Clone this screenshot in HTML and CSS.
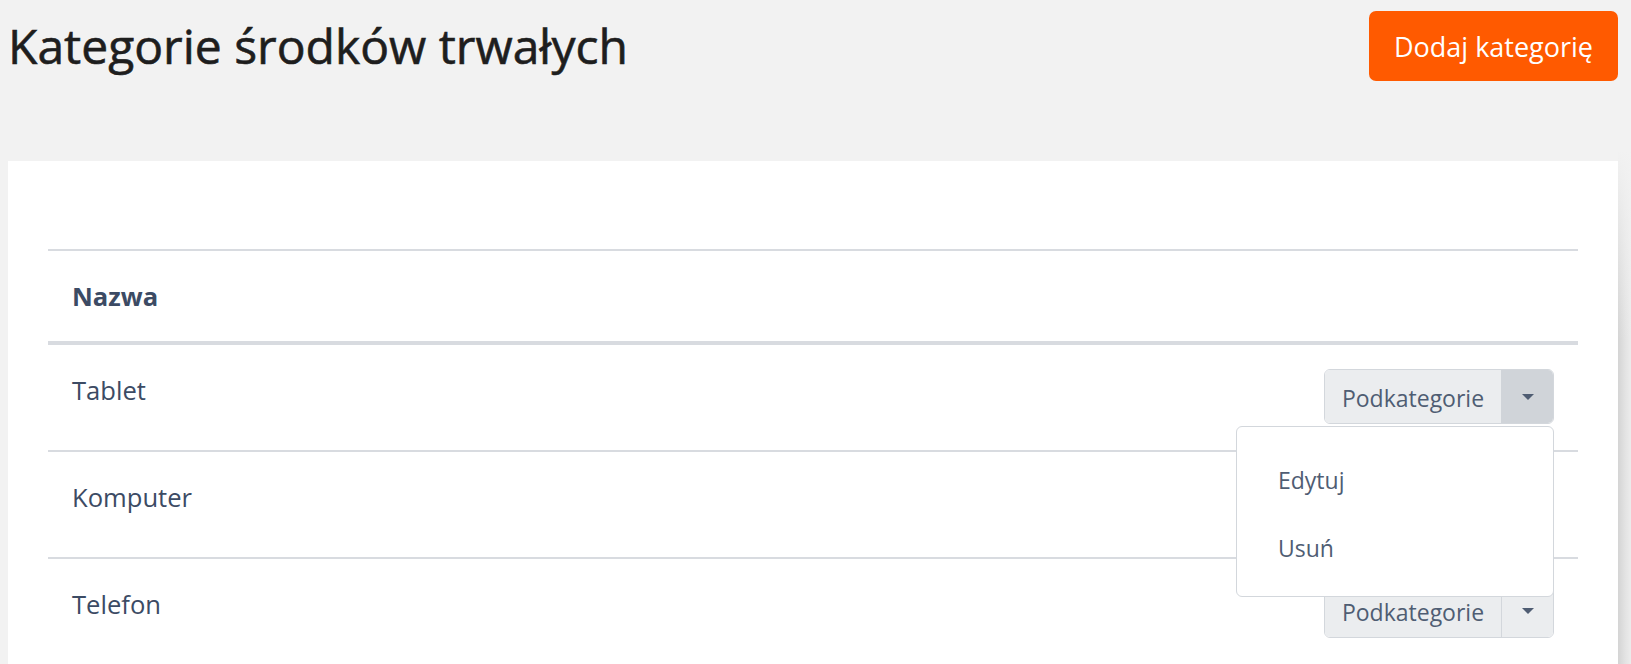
FILE: index.html
```html
<!DOCTYPE html>
<html lang="pl">
<head>
<meta charset="utf-8">
<title>Kategorie środków trwałych</title>
<link rel="stylesheet" href="styles.css">
</head>
<body>
<div class="page">
  <header class="page-head">
    <h1 class="title">Kategorie środków trwałych</h1>
    <button class="btn-add" type="button">Dodaj kategorię</button>
  </header>
  <section class="card">
    <table class="tbl">
      <thead>
        <tr><th>Nazwa</th><th></th></tr>
      </thead>
      <tbody>
        <tr>
          <td class="name">Tablet</td>
          <td class="actions">
            <div class="btn-group open">
              <button class="btn-main" type="button">Podkategorie</button>
              <button class="btn-caret" type="button"><span class="caret"></span></button>
              <div class="menu">
                <a class="menu-item">Edytuj</a>
                <a class="menu-item">Usuń</a>
              </div>
            </div>
          </td>
        </tr>
        <tr>
          <td class="name">Komputer</td>
          <td class="actions">
            <div class="btn-group">
              <button class="btn-main" type="button">Podkategorie</button>
              <button class="btn-caret" type="button"><span class="caret"></span></button>
            </div>
          </td>
        </tr>
        <tr>
          <td class="name">Telefon</td>
          <td class="actions">
            <div class="btn-group">
              <button class="btn-main" type="button">Podkategorie</button>
              <button class="btn-caret" type="button"><span class="caret"></span></button>
            </div>
          </td>
        </tr>
      </tbody>
    </table>
  </section>
  <div class="edge-shade"></div>
</div>
</body>
</html>
```
FILE: styles.css
```css
* { box-sizing: border-box; }

body {
  margin: 0;
  background: #f2f2f2;
  font-family: "Open Sans", "Noto Sans", sans-serif;
  font-size: 25.6px;
  line-height: 40px;
  color: #3c4b64;
}

.page {
  padding: 11px 13px 0 8px;
}

.page-head {
  display: flex;
  justify-content: space-between;
  align-items: center;
  height: 70px;
}

.title {
  margin: 0;
  font-size: 48px;
  font-weight: 400;
  line-height: 1;
  color: #1e1e1e;
  -webkit-text-stroke: 0.6px #1e1e1e;
}

.btn-add {
  height: 70px;
  width: 249px;
  padding: 0;
  border: 0;
  border-radius: 7px;
  background: #ff5a00;
  color: #fff;
  font-family: inherit;
  font-size: 27px;
}

.card {
  margin-top: 80px;
  background: #fff;
  padding: 88px 40px 40px;
}

.tbl {
  width: 100%;
  border-collapse: collapse;
}

.tbl th {
  text-align: left;
  font-weight: 700;
  padding: 26px 24px 24px;
  border-top: 2px solid #d8dbe0;
  border-bottom: 4px solid #d8dbe0;
}

.tbl td {
  padding: 24px 24px 26px;
  vertical-align: top;
  border-bottom: 2px solid #d8dbe0;
}

.tbl td.name {
  padding-top: 26px;
}

.tbl td.actions {
  text-align: right;
}

.btn-group {
  position: relative;
  display: inline-flex;
  height: 55px;
  border: 1px solid #d3d7dc;
  border-radius: 6px;
}

.btn-main,
.btn-caret {
  border: 0;
  margin: 0;
  font-family: inherit;
  font-size: 23px;
  color: #4f5d73;
  background: #ebedef;
}

.btn-main {
  width: 176px;
  padding: 3px 0 0;
  border-radius: 5px 0 0 5px;
}

.btn-caret {
  width: 52px;
  display: flex;
  align-items: center;
  justify-content: center;
  border-left: 1px solid #d3d7dc;
  border-radius: 0 5px 5px 0;
}

.open .btn-caret {
  background: #d0d4d9;
  border-left-color: #d0d4d9;
}

.caret {
  width: 0;
  height: 0;
  border-top: 6px solid #4f5d73;
  border-left: 6px solid transparent;
  border-right: 6px solid transparent;
}

.menu {
  position: absolute;
  top: calc(100% + 3px);
  right: -1px;
  z-index: 5;
  width: 318px;
  padding: 19px 0 14px;
  background: #fff;
  border: 1px solid #d3d7dc;
  border-radius: 6px;
  text-align: left;
}

.menu-item {
  display: block;
  padding: 14px 41px;
  font-size: 23px;
  line-height: 40px;
  color: #4f5d73;
}

.edge-shade {
  position: fixed;
  top: 0;
  right: 0;
  width: 13px;
  height: 100%;
  background:
    linear-gradient(#f2f2f2 0, #f2f2f2 150px, rgba(242, 242, 242, 0) 340px),
    linear-gradient(to right, #d4d4d4, #e4e4e4 60%, #ececec);
}
```
